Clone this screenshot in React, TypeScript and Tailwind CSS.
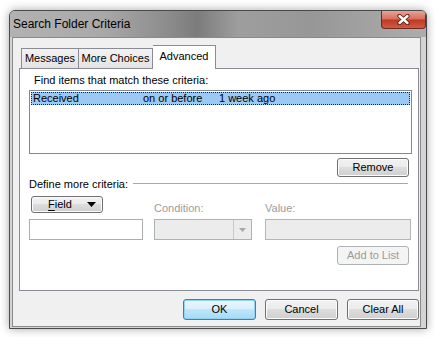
import React from "react";

function Btn({
  children,
  w = "w-[72px]",
  h = "h-[19px]",
  kind = "normal",
  className = "",
}: {
  children: React.ReactNode;
  w?: string;
  h?: string;
  kind?: "normal" | "primary" | "disabled";
  className?: string;
}) {
  const look =
    kind === "primary"
      ? "border-[#3c7fb1] bg-[linear-gradient(#eaf6fd_0%,#d9f0fc_49%,#bee6fd_50%,#a7d9f5_100%)] shadow-[inset_0_0_0_1px_#8fd3f5] text-black"
      : kind === "disabled"
      ? "border-[#adb2b5] bg-[#f4f4f4] text-[#9a9a9a]"
      : "border-[#707070] bg-[linear-gradient(#f2f2f2_0%,#ebebeb_49%,#dddddd_50%,#cfcfcf_100%)] shadow-[inset_0_0_0_1px_#fcfcfc] text-black";
  return (
    <div
      className={`${w} ${h} ${look} ${className} border rounded-[3px] flex items-center justify-center text-[11px] leading-[13px] whitespace-nowrap shrink-0`}
    >
      {children}
    </div>
  );
}

export default function App() {
  return (
    <div className="w-[435px] h-[337px] bg-white pt-[10px] pl-[9px] overflow-hidden font-['Liberation_Sans',Arial,sans-serif] text-black">
      {/* window */}
      <div className="w-[418px] h-[319px] flex flex-col rounded-t-[6px] border border-[#4a4a4a] bg-[#d4d4d4] shadow-[0_0_10px_rgba(0,0,0,0.35)] overflow-hidden">
        {/* title bar */}
        <div className="h-[26px] shrink-0 flex items-start justify-between bg-[linear-gradient(90deg,#b2b2b2_0%,#a9a9a9_22%,#8c8c8c_38%,#7c7c7c_45%,#9e9e9e_55%,#979797_72%,#adadad_100%)]">
          <span className="pl-[3px] pt-[6px] text-[12px] leading-[14px]">Search Folder Criteria</span>
          <div className="w-[45px] h-[18px] rounded-b-[4px] border border-t-0 border-[#6b2a22] bg-[linear-gradient(#e9a395_0%,#d8705e_45%,#c03a26_55%,#d25a43_100%)] flex items-center justify-center">
            <svg width="13" height="11" viewBox="0 0 13 11">
              <path d="M2.5 2 L10.5 9 M10.5 2 L2.5 9" stroke="#5a1a12" strokeWidth="4.2" strokeLinecap="round" />
              <path d="M2.5 2 L10.5 9 M10.5 2 L2.5 9" stroke="#ffffff" strokeWidth="2.4" strokeLinecap="round" />
            </svg>
          </div>
        </div>

        {/* client area */}
        <div className="flex-1 ml-[2px] mr-[5px] mb-[1px] border border-[#8a8a8a] bg-[#f0f0f0] flex flex-col">
          {/* tabs */}
          <div className="h-[30px] shrink-0 flex items-end pl-[8px] text-[11px] leading-[13px] whitespace-nowrap">
            <div className="w-[58px] h-[20px] border border-b-0 border-[#898c95] bg-[linear-gradient(#f2f2f2,#e3e3e3)] flex items-center justify-center">
              Messages
            </div>
            <div className="w-[74px] h-[20px] border border-b-0 border-l-0 border-[#898c95] bg-[linear-gradient(#f2f2f2,#e3e3e3)] flex items-center justify-center">
              More Choices
            </div>
            <div className="w-[63px] h-[24px] -mb-px relative z-10 border border-b-0 border-l-0 border-[#898c95] bg-white flex items-start justify-center pt-[4px]">
              Advanced
            </div>
          </div>

          {/* tab panel */}
          <div className="ml-[6px] w-[400px] h-[223px] shrink-0 border border-[#898c95] bg-white flex flex-col text-[11px] leading-[14px]">
            <div className="mt-[4px] ml-[14px]">Find items that match these criteria:</div>

            <div className="mt-[3px] ml-[9px] w-[383px] h-[64px] border border-[#828790] bg-white p-px">
              <div className="h-[13px] bg-[#9cc8f4] border border-dotted border-[#222] flex items-center text-[11px] leading-[11px] whitespace-nowrap">
                <span className="ml-[1px] w-[110px]">Received</span>
                <span className="w-[76px]">on or before</span>
                <span>1 week ago</span>
              </div>
            </div>

            <Btn className="mt-[4px] self-end mr-[9px]">Remove</Btn>

            <div className="ml-[9px] mr-[10px] flex items-center">
              <span>Define more criteria:</span>
              <div className="flex-1 ml-[5px] h-[2px] border-t border-[#a9a9a9] border-b border-b-white" />
            </div>

            {/* field / condition / value labels */}
            <div className="mt-[5px] ml-[9px] h-[19px] flex">
              <div className="w-[114px] shrink-0">
                <Btn w="w-[72px]" h="h-[17px]" className="ml-[2px] relative">
                  <span className="ml-[-14px]">
                    <span className="underline underline-offset-2">F</span>ield
                  </span>
                  <svg className="absolute right-[6px] top-[5px]" width="9" height="5" viewBox="0 0 9 5">
                    <path d="M0 0 H9 L4.5 5 Z" fill="#000" />
                  </svg>
                </Btn>
              </div>
              <div className="ml-[11px] w-[98px] self-end text-[#9c9c9c]">Condition:</div>
              <div className="ml-[13px] self-end text-[#9c9c9c]">Value:</div>
            </div>

            {/* inputs */}
            <div className="mt-[4px] ml-[9px] flex">
              <div className="w-[114px] h-[21px] border border-[#abadb3] bg-white" />
              <div className="ml-[11px] w-[98px] h-[21px] border border-[#adb2b5] bg-[#ececec] flex justify-end">
                <div className="w-[18px] h-full border-l border-[#c8c8c8] flex items-center justify-center">
                  <svg width="7" height="4" viewBox="0 0 7 4">
                    <path d="M0 0 H7 L3.5 4 Z" fill="#a8a8a8" />
                  </svg>
                </div>
              </div>
              <div className="ml-[13px] w-[146px] h-[21px] border border-[#b5b5b5] bg-[#ececec]" />
            </div>

            <Btn kind="disabled" className="mt-[6px] self-end mr-[9px]">Add to List</Btn>
          </div>

          {/* dialog buttons */}
          <div className="mt-[8px] mr-[1px] flex justify-end gap-[9px]">
            <Btn kind="primary" w="w-[73px]" h="h-[21px]">OK</Btn>
            <Btn w="w-[73px]" h="h-[21px]">Cancel</Btn>
            <Btn w="w-[72px]" h="h-[21px]">Clear All</Btn>
          </div>
        </div>
      </div>
    </div>
  );
}
